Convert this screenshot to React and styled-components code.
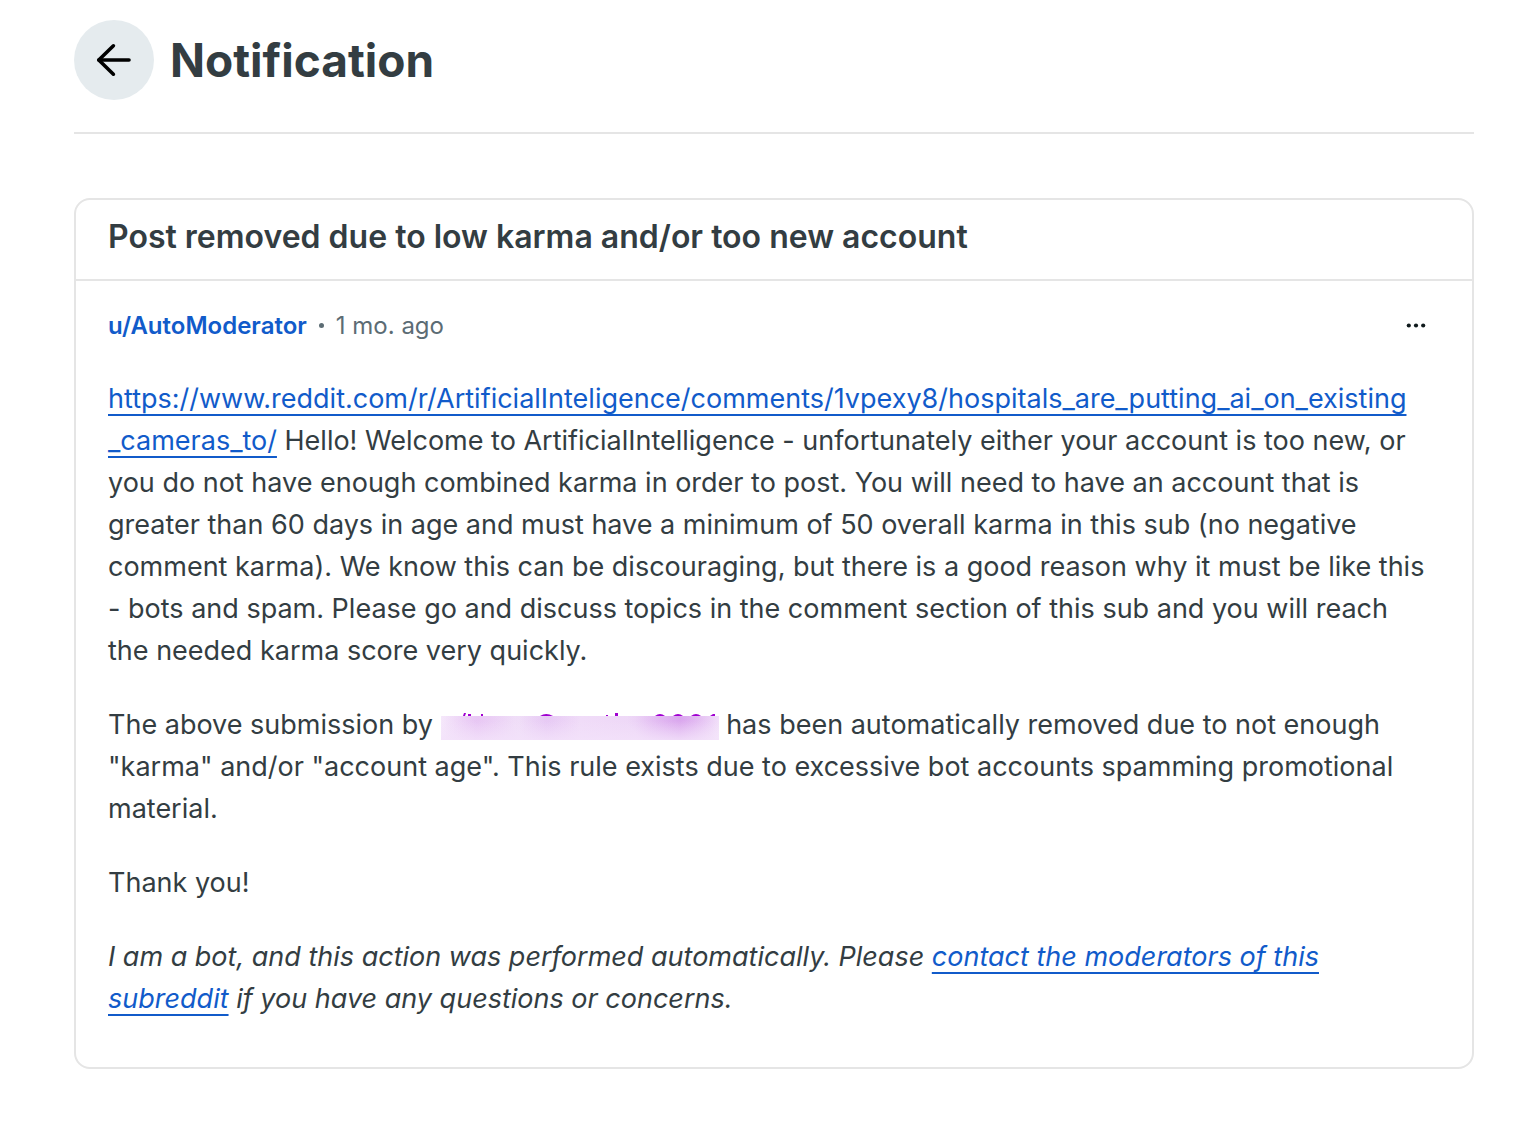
import React from 'react';
import styled, { createGlobalStyle } from 'styled-components';

const App = () => {
    return (
        <>
            <GlobalStyle />
            <Page>
                <PageHeader>
                    <BackButton type="button" aria-label="Back">
                        <BackIcon />
                    </BackButton>
                    <PageTitle>Notification</PageTitle>
                </PageHeader>
                <Card>
                    <CardHeader>
                        <CardTitle>Post removed due to low karma and/or too new account</CardTitle>
                    </CardHeader>
                    <CardBody>
                        <Meta>
                            <Author href="#author">u/AutoModerator</Author>
                            <Dot />
                            <Time>1 mo. ago</Time>
                            <MoreButton type="button" aria-label="More options">
                                <MoreIcon />
                            </MoreButton>
                        </Meta>
                        <Message>
                            <p>
                                <TextLink href="#post">
                                    https://www.reddit.com/r/ArtificialInteligence/comments/1vpexy8/hospitals_are_putting_ai_on_existing
                                    <wbr />
                                    _cameras_to/
                                </TextLink>{' '}
                                Hello! Welcome to ArtificialIntelligence - unfortunately either your account is
                                too new, or you do not have enough combined karma in order to post. You will
                                need to have an account that is greater than 60 days in age and must have a
                                minimum of 50 overall karma in this sub (no negative comment karma). We know
                                this can be discouraging, but there is a good reason why it must be like this
                                -&nbsp;bots and spam. Please go and discuss topics in the comment section of
                                this sub and you will reach the&nbsp;needed karma score very quickly.
                            </p>
                            <p>
                                The above submission by <HiddenName /> has been automatically removed due to
                                not enough "karma" and/or "account age". This rule exists due to excessive bot
                                accounts spamming promotional material.
                            </p>
                            <p>Thank you!</p>
                            <p>
                                <em>
                                    I am a bot, and this action was performed automatically. Please{' '}
                                    <TextLink href="#moderators">contact the moderators of this subreddit</TextLink>{' '}
                                    if you have any questions or concerns.
                                </em>
                            </p>
                        </Message>
                    </CardBody>
                </Card>
            </Page>
        </>
    );
};

const BackIcon = () => (
    <svg width="40" height="40" viewBox="0 0 40 40" fill="none" stroke="#000" strokeWidth="3.6" strokeLinecap="round" aria-hidden="true">
        <path d="M19.4 5.8 L4.8 20 L19.4 34.2" strokeLinejoin="round" />
        <path d="M4.8 20 H35" />
    </svg>
);

const MoreIcon = () => (
    <svg width="20" height="6" viewBox="0 0 20 6" fill="#0f1a1c" aria-hidden="true">
        <circle cx="2.8" cy="2.5" r="2.1" />
        <circle cx="10" cy="2.5" r="2.1" />
        <circle cx="17.2" cy="2.5" r="2.1" />
    </svg>
);

// user name covered by a blurred strip
const HiddenName = () => (
    <Smudge width="278" height="27" viewBox="0 0 278 27" role="img" aria-label="Hidden user name">
        <defs>
            <linearGradient id="strip">
                <stop offset="0" stopColor="#f6eafb" />
                <stop offset="0.13" stopColor="#ebcff5" />
                <stop offset="0.28" stopColor="#f0dff8" />
                <stop offset="0.38" stopColor="#e9cff5" />
                <stop offset="0.5" stopColor="#f0dcf8" />
                <stop offset="0.7" stopColor="#eed8f7" />
                <stop offset="0.86" stopColor="#e0b8f0" />
                <stop offset="1" stopColor="#f6ebfb" />
            </linearGradient>
            <radialGradient id="spot">
                <stop offset="0" stopColor="#cf86ea" stopOpacity="0.4" />
                <stop offset="1" stopColor="#cf86ea" stopOpacity="0" />
            </radialGradient>
            <linearGradient id="fade" x1="0" y1="0" x2="0" y2="1">
                <stop offset="0.2" stopColor="#f3e2fa" stopOpacity="0" />
                <stop offset="1" stopColor="#f3e2fa" stopOpacity="0.8" />
            </linearGradient>
            <clipPath id="stripArea">
                <rect y="3" width="278" height="24" />
            </clipPath>
        </defs>
        <rect y="3" width="278" height="24" fill="url(#strip)" />
        <g clipPath="url(#stripArea)">
            <ellipse cx="34" cy="8" rx="40" ry="24" fill="url(#spot)" opacity="0.3" />
            <ellipse cx="106" cy="8" rx="34" ry="22" fill="url(#spot)" opacity="0.2" />
            <ellipse cx="240" cy="6" rx="54" ry="26" fill="url(#spot)" opacity="0.9" />
        </g>
        <rect y="3" width="278" height="24" fill="url(#fade)" />
        <g fill="#a000d0">
            <path d="M22 3 L23 0 H25 L24 3 Z" />
            <rect x="27" y="1" width="3" height="2" />
            <rect x="40" y="1" width="2" height="2" />
            <path d="M99 3 Q105 -1 112 3 Z" />
            <rect x="165" y="2" width="2" height="1" />
            <rect x="174" y="0" width="3" height="3" />
            <path d="M214 3 Q219 -1 224 3 Z" />
            <path d="M232 3 Q237 -1 242 3 Z" />
            <path d="M250 3 Q255 -1 260 3 Z" />
            <path d="M269 3 L272 1 H274 V3 Z" />
        </g>
    </Smudge>
);

const GlobalStyle = createGlobalStyle`
    * {
        box-sizing: border-box;
    }

    body {
        margin: 0;
        background-color: #fff;
        color: #333d42;
        font-family: Inter, "Liberation Sans", sans-serif;
    }
`;

const Page = styled.main`
    padding: 20px 40px 80px 74px;
`;

const PageHeader = styled.header`
    display: flex;
    align-items: center;
    gap: 16px;
    padding-bottom: 32px;
    margin-bottom: 64px;
    border-bottom: 2px solid #e5e5e5;
`;

const BackButton = styled.button`
    display: flex;
    align-items: center;
    justify-content: center;
    width: 80px;
    height: 80px;
    padding: 0;
    border: none;
    border-radius: 50%;
    background-color: #e5ebee;
    cursor: pointer;
`;

const PageTitle = styled.h1`
    margin: 0;
    font-size: 46px;
    line-height: 56px;
    font-weight: 700;
`;

const Card = styled.article`
    border: 2px solid #e5e5e5;
    border-radius: 16px;
`;

const CardHeader = styled.div`
    padding: 17px 32px 22px;
    border-bottom: 2px solid #e5e5e5;
`;

const CardTitle = styled.h2`
    margin: 0;
    font-size: 32px;
    line-height: 40px;
    font-weight: 600;
`;

const CardBody = styled.div`
    padding: 24px 32px 47px;
`;

const Meta = styled.div`
    display: flex;
    align-items: center;
    margin-bottom: 32px;
    font-size: 24px;
    line-height: 41px;
`;

const Author = styled.a`
    color: #115bca;
    font-weight: 600;
    text-decoration: none;
`;

const Dot = styled.span`
    width: 5px;
    height: 5px;
    margin: 0 12px;
    border-radius: 50%;
    background-color: #5c6c74;
`;

const Time = styled.span`
    color: #5c6c74;
`;

const MoreButton = styled.button`
    display: flex;
    align-items: center;
    justify-content: center;
    width: 48px;
    height: 40px;
    margin-left: auto;
    padding: 0;
    border: none;
    background: none;
    cursor: pointer;
`;

const Message = styled.div`
    font-size: 27px;
    line-height: 42px;

    p {
        margin: 0 0 32px;
    }

    p:last-child {
        margin-bottom: 0;
    }
`;

const TextLink = styled.a`
    color: #115bca;
    text-decoration: underline;
    text-decoration-thickness: 2px;
    text-decoration-skip-ink: none;
    text-underline-offset: 6px;
`;

const Smudge = styled.svg`
    vertical-align: -6px;
`;

export default App;
